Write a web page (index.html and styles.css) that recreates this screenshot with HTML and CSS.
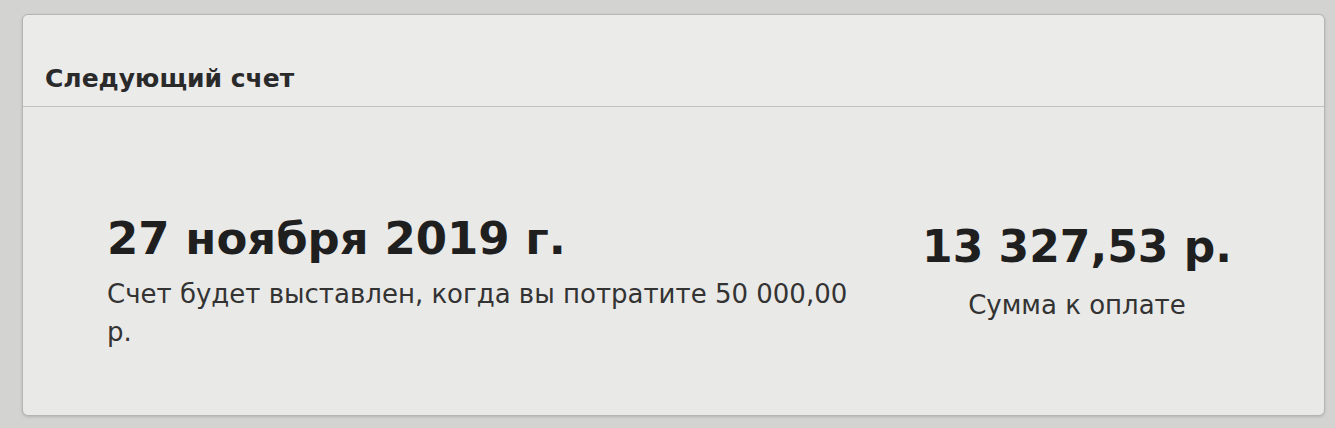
FILE: index.html
```html
<!DOCTYPE html>
<html lang="ru">
<head>
    <meta charset="UTF-8">
    <meta name="viewport" content="width=device-width, initial-scale=1.0">
    <title>Следующий счет</title>
    <link rel="stylesheet" href="styles.css">
</head>
<body>
    <div class="card">
        <div class="card-header">
            <h3>Следующий счет</h3>
        </div>
        <div class="card-body">
            <div class="bill-date">
                <div class="big">27 ноября 2019 г.</div>
                <p class="note">Счет будет выставлен, когда вы потратите 50 000,00 р.</p>
            </div>
            <div class="bill-sum">
                <div class="big">13 327,53 р.</div>
                <p class="note">Сумма к оплате</p>
            </div>
        </div>
    </div>
</body>
</html>
```

FILE: styles.css
```css
body {
    font-family: "DejaVu Sans", "Liberation Sans", sans-serif;
    margin: 0;
    background: #d3d3d1;
    padding: 14px 10px 0 22px;
    height: 428px;
    box-sizing: border-box;
    overflow: hidden;
}

.card {
    background: #e9e9e7;
    border: 1px solid #b5b5b3;
    border-radius: 6px;
    height: 400px;
    box-shadow: 0 1px 3px rgba(0, 0, 0, 0.15);
}

.card-header {
    height: 92px;
    box-sizing: border-box;
    display: flex;
    align-items: flex-end;
    padding: 0 22px 13px;
    border-bottom: 1px solid #c2c2c0;
    background: #ebebea;
    border-radius: 6px 6px 0 0;
}

.card-header h3 {
    margin: 0;
    font-size: 25px;
    font-weight: bold;
    color: #2a2a2a;
    line-height: 29px;
}

.card-body {
    display: flex;
    align-items: flex-start;
    padding: 107px 77px 0 84px;
}

.bill-date {
    width: 770px;
}

.bill-sum {
    margin-left: auto;
    width: 340px;
    text-align: center;
    padding-top: 9px;
}

.big {
    font-size: 45px;
    font-weight: bold;
    color: #1f1f1f;
    line-height: 1.1;
}

.bill-sum .big {
    font-size: 44px;
}

.note {
    margin: 11px 0 0;
    font-size: 26px;
    line-height: 38px;
    color: #333;
}

.bill-sum .note {
    margin-top: 15px;
}
```
